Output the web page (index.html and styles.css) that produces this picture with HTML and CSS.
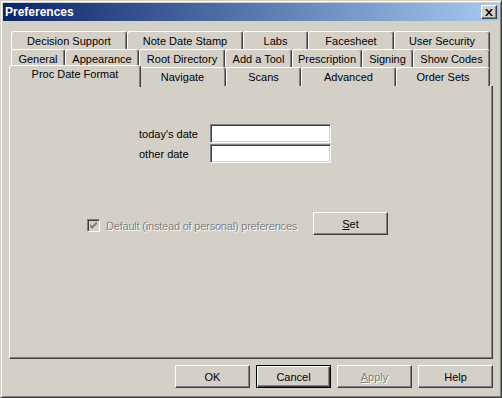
FILE: index.html
```html
<!DOCTYPE html>
<html lang="en">
<head>
  <meta charset="UTF-8" />
  <title>Preferences</title>
  <link rel="stylesheet" href="styles.css">
</head>
<body>

<div class="window">
  <div class="titlebar">
    <span class="title">Preferences</span>
    <span class="close-btn">
      <svg width="8" height="7" viewBox="0 0 8 7">
        <path d="M0 0 L2 0 L4 2.5 L6 0 L8 0 L5 3.5 L8 7 L6 7 L4 4.5 L2 7 L0 7 L3 3.5 Z" fill="#000" />
      </svg>
    </span>
  </div>

  <div class="dialog-body">
    <div class="tabs">
      <div class="tab-row row-1">
        <div class="tab">Decision Support</div>
        <div class="tab">Note Date Stamp</div>
        <div class="tab">Labs</div>
        <div class="tab">Facesheet</div>
        <div class="tab">User Security</div>
      </div>
      <div class="tab-row row-2">
        <div class="tab">General</div>
        <div class="tab">Appearance</div>
        <div class="tab">Root Directory</div>
        <div class="tab">Add a Tool</div>
        <div class="tab">Prescription</div>
        <div class="tab">Signing</div>
        <div class="tab">Show Codes</div>
      </div>
      <div class="tab-row row-3">
        <div class="tab selected">Proc Date Format</div>
        <div class="tab">Navigate</div>
        <div class="tab">Scans</div>
        <div class="tab">Advanced</div>
        <div class="tab">Order Sets</div>
      </div>
    </div>

    <div class="panel">
      <div class="date-fields">
        <label for="today">today's date</label>
        <input type="text" id="today" />
        <label for="other">other date</label>
        <input type="text" id="other" />
      </div>

      <div class="default-row">
        <label class="check-label">
          <span class="checkbox">
            <svg width="7" height="7" viewBox="0 0 7 7">
              <path d="M0 2 L2 4 L7 -1 L7 2 L2 7 L0 5 Z" fill="#808080" />
            </svg>
          </span>
          <span class="disabled-text">Default (instead of personal) preferences</span>
        </label>
        <button class="btn"><u>S</u>et</button>
      </div>
    </div>

    <div class="footer">
      <button class="btn">OK</button>
      <button class="btn default">Cancel</button>
      <button class="btn" disabled><span class="disabled-text"><u>A</u>pply</span></button>
      <button class="btn">Help</button>
    </div>
  </div>
</div>

</body>
</html>
```

FILE: styles.css
```css
body {
  margin: 0;
  background-color: #d4d0c8;
  font-family: 'Liberation Sans', Arial, sans-serif;
  font-size: 11px;
  color: #000;
}

.window {
  width: 502px;
  height: 398px;
  box-sizing: border-box;
  padding: 2px;
  border: 1px solid;
  border-color: #d4d0c8 #404040 #404040 #d4d0c8;
  box-shadow: inset 1px 1px #fff, inset -1px -1px #808080;
  background-color: #d4d0c8;
}

.titlebar {
  height: 18px;
  display: flex;
  align-items: center;
  justify-content: space-between;
  padding: 0 2px 0 2px;
  background: linear-gradient(to right, #0a246a, #a6caf0);
}

.title {
  color: #fff;
  font-weight: bold;
  font-size: 12px;
}

.close-btn {
  width: 16px;
  height: 14px;
  box-sizing: border-box;
  display: flex;
  align-items: center;
  justify-content: center;
  background-color: #d4d0c8;
  border: 1px solid;
  border-color: #fff #404040 #404040 #fff;
  box-shadow: inset -1px -1px #808080;
}

.dialog-body {
  padding: 10px 6px 0 6px;
}

/* tabs */
.tabs {
  margin: 0 2px;
}

.tab-row {
  display: grid;
  height: 18px;
}

.row-1 {
  grid-template-columns: 116px 116px 65px 86px 96px;
}

.row-2 {
  grid-template-columns: 54px 74px 86px 67px 70px 51px 77px;
}

.row-3 {
  grid-template-columns: 128px 87px 75px 95px 94px;
}

.tab {
  box-sizing: border-box;
  border: 1px solid;
  border-bottom: none;
  border-color: #fff #404040 #404040 #fff;
  border-radius: 3px 3px 0 0;
  box-shadow: inset -1px 0 #808080;
  background-color: #d4d0c8;
  text-align: center;
  line-height: 18px;
  white-space: nowrap;
}

.tab.selected {
  position: relative;
  z-index: 1;
  margin: -2px -2px -1px -2px;
  line-height: 17px;
}

.panel {
  height: 274px;
  box-sizing: border-box;
  border: 1px solid;
  border-color: #fff #404040 #404040 #fff;
  box-shadow: inset -1px -1px #808080;
  padding: 38px 0 0 129px;
}

.date-fields {
  display: grid;
  grid-template-columns: 71px 121px;
  grid-auto-rows: 19px;
  row-gap: 1px;
  align-items: center;
}

.date-fields input {
  height: 19px;
  box-sizing: border-box;
  margin: 0;
  border: 1px solid;
  border-color: #808080 #fff #fff #808080;
  box-shadow: inset 1px 1px #404040, inset -1px -1px #d4d0c8;
  background: #fff;
  font: inherit;
  outline: none;
}

.default-row {
  display: flex;
  align-items: center;
  justify-content: space-between;
  width: 301px;
  margin: 49px 0 0 -52px;
}

.check-label {
  display: flex;
  align-items: center;
  gap: 6px;
  padding-top: 4px;
}

.check-label .disabled-text {
  letter-spacing: -0.2px;
}

.checkbox {
  width: 13px;
  height: 13px;
  box-sizing: border-box;
  display: flex;
  align-items: center;
  justify-content: center;
  border: 1px solid;
  border-color: #808080 #fff #fff #808080;
  box-shadow: inset 1px 1px #404040, inset -1px -1px #d4d0c8;
  background-color: #d4d0c8;
}

.disabled-text {
  color: #808080;
  text-shadow: 1px 1px #fff;
}

/* buttons */
.btn {
  width: 75px;
  height: 23px;
  box-sizing: border-box;
  margin: 0;
  padding: 0;
  border: 1px solid;
  border-color: #fff #404040 #404040 #fff;
  box-shadow: inset -1px -1px #808080;
  background-color: #d4d0c8;
  font: inherit;
  color: #000;
}

.btn.default {
  border-color: #000;
  box-shadow: inset 1px 1px #fff, inset -1px -1px #404040, inset -2px -2px #808080;
}

.footer {
  display: flex;
  justify-content: flex-end;
  gap: 6px;
  margin-top: 6px;
}
```
